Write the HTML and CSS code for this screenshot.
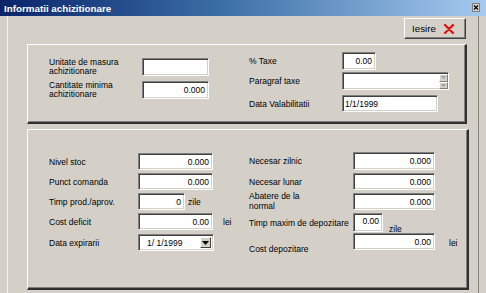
FILE: index.html
```html
<!DOCTYPE html>
<html>
<head>
<meta charset="utf-8">
<link rel="stylesheet" href="styles.css">
</head>
<body>
<div class="window">
  <div class="titlebar">
    <span class="title">Informatii achizitionare</span>
    <span class="close"><svg width="8" height="9" viewBox="0 0 8 9"><rect x="0.5" y="0.5" width="7" height="8" fill="#d4d0c8" stroke="#808080"/><path d="M2 2.5 L6 6.5 M6 2.5 L2 6.5" stroke="#000" stroke-width="1.1"/></svg></span>
  </div>
  <div class="client">
    <div class="toolbar">
      <div class="btn-exit"><span class="btn-label">Iesire</span><svg class="xicon" width="12" height="10" viewBox="0 0 12 10"><path d="M2 1 L10 9 M10 1 L2 9" stroke="#e01010" stroke-width="2.2" stroke-linecap="round"/></svg></div>
    </div>

    <div class="panel panel-top">
      <div class="col col-left-top">
        <div class="row r-h18 mb5">
          <div class="lbl w93 two">Unitate de masura<br>achizitionare</div>
          <div class="field w67 h18"></div>
        </div>
        <div class="row r-h18">
          <div class="lbl w93 two">Cantitate minima<br>achizitionare</div>
          <div class="field w67 h18">0.000</div>
        </div>
      </div>
      <div class="col col-right-top">
        <div class="row r-h18">
          <div class="lbl w93">% Taxe</div>
          <div class="field w34 h18">0.00</div>
        </div>
        <div class="row r-h18 mt2">
          <div class="lbl w93">Paragraf taxe</div>
          <div class="field combo w107 h18">
            <div class="spin">
              <span class="spinbtn"><svg width="5" height="3" viewBox="0 0 5 3"><path d="M0 0 H5 L2.5 3 Z" fill="#a0a0a0"/></svg></span>
              <span class="spinbtn"><svg width="5" height="3" viewBox="0 0 5 3"><path d="M0 0 H5 L2.5 3 Z" fill="#a0a0a0"/></svg></span>
            </div>
          </div>
        </div>
        <div class="row r-h17 mt5">
          <div class="lbl w93">Data Valabilitatii</div>
          <div class="field left w96 h17">1/1/1999</div>
        </div>
      </div>
    </div>

    <div class="panel panel-bottom">
      <div class="col col-left-bot">
        <div class="row r-h17 mb3">
          <div class="lbl w89">Nivel stoc</div>
          <div class="field w75 h17">0.000</div>
        </div>
        <div class="row r-h17 mb3">
          <div class="lbl w89">Punct comanda</div>
          <div class="field w75 h17">0.000</div>
        </div>
        <div class="row r-h17 mb3">
          <div class="lbl w89">Timp prod./aprov.</div>
          <div class="field w47 h17">0</div>
          <span class="unit u-zile">zile</span>
        </div>
        <div class="row r-h17 mb4">
          <div class="lbl w89">Cost deficit</div>
          <div class="field w75 h17">0.00</div>
          <span class="unit u-lei">lei</span>
        </div>
        <div class="row r-h17">
          <div class="lbl w89">Data expirarii</div>
          <div class="field date w76 h17">
            <span class="dateval">1/ 1/1999</span>
            <span class="dropbtn"><svg width="7" height="4" viewBox="0 0 7 4"><path d="M0 0 H7 L3.5 4 Z" fill="#000"/></svg></span>
          </div>
        </div>
      </div>
      <div class="col col-right-bot">
        <div class="row r-h18 mb3">
          <div class="lbl w104">Necesar zilnic</div>
          <div class="field w82 h18">0.000</div>
        </div>
        <div class="row r-h17 mb3">
          <div class="lbl w104">Necesar lunar</div>
          <div class="field w82 h17">0.000</div>
        </div>
        <div class="row r-h17 mb3">
          <div class="lbl w104 two">Abatere de la<br>normal</div>
          <div class="field w82 h17">0.000</div>
        </div>
        <div class="row r-h19 mb1">
          <div class="lbl w104">Timp maxim de depozitare</div>
          <div class="field w30 h19 top">0.00</div>
          <span class="unit u-zile2">zile</span>
        </div>
        <div class="row r-h17">
          <div class="lbl w104 low">Cost depozitare</div>
          <div class="field w82 h17">0.00</div>
          <span class="unit u-lei2">lei</span>
        </div>
      </div>
    </div>
  </div>
</div>
</body>
</html>
```

FILE: styles.css
```css
html, body {
  margin: 0;
  padding: 0;
}
body {
  width: 486px;
  height: 293px;
  overflow: hidden;
  background: #d4d0c8;
  font-family: "Liberation Sans", Arial, sans-serif;
  font-size: 8.5px;
  color: #000;
}
.window {
  width: 486px;
  height: 293px;
  display: flex;
  flex-direction: column;
}
.titlebar {
  height: 16px;
  flex: none;
  background: linear-gradient(to right, #0a246a 0%, #3a6ea5 45%, #a6caf0 100%);
  display: flex;
  align-items: center;
  justify-content: space-between;
  box-sizing: border-box;
  padding: 1px 6px 0 4px;
}
.title {
  color: #fff;
  font-weight: bold;
  font-size: 9.8px;
  letter-spacing: 0;
}
.close {
  display: flex;
  margin-top: -2px;
}
.client {
  flex: 1;
  margin-left: 7px;
  width: 472px;
  box-sizing: border-box;
  border-left: 1px solid #f4f3f0;
  border-right: 1px solid #8a8780;
  padding-left: 19px;
}
.toolbar {
  display: flex;
  justify-content: flex-end;
  padding-top: 2px;
  padding-right: 12px;
}
.btn-exit {
  width: 62px;
  height: 21px;
  box-sizing: border-box;
  border-top: 1px solid #fff;
  border-left: 1px solid #fff;
  border-right: 1px solid #404040;
  border-bottom: 1px solid #404040;
  box-shadow: inset -1px -1px 0 #808080;
  display: flex;
  align-items: center;
  padding-left: 7px;
}
.btn-label {
  font-size: 9.8px;
  width: 31px;
}
.xicon {
  display: block;
  margin-top: 1px;
}
.panel {
  box-sizing: border-box;
  border-top: 1px solid #fff;
  border-left: 1px solid #fff;
  border-right: 2px solid #303030;
  border-bottom: 2px solid #303030;
  box-shadow: inset -1px -1px 0 #808080;
  display: flex;
}
.panel-top {
  margin-top: 5px;
  width: 440px;
  height: 80px;
}
.panel-bottom {
  margin-top: 5px;
  width: 442px;
  height: 161px;
}
.col {
  display: flex;
  flex-direction: column;
}
.col-left-top {
  width: 221px;
  box-sizing: border-box;
  padding-left: 21px;
  padding-top: 13px;
}
.col-right-top {
  padding-top: 7px;
}
.col-left-bot {
  width: 221px;
  box-sizing: border-box;
  padding-left: 21px;
  padding-top: 23px;
}
.col-right-bot {
  padding-top: 22px;
}
.row {
  display: flex;
  align-items: center;
  flex: none;
}
.r-h17 { height: 17px; }
.r-h18 { height: 18px; }
.r-h19 { height: 19px; }
.mb1 { margin-bottom: 1px; }
.mb3 { margin-bottom: 3px; }
.mb4 { margin-bottom: 4px; }
.mb5 { margin-bottom: 5px; }
.mt2 { margin-top: 2px; }
.mt5 { margin-top: 5px; }
.lbl {
  flex: none;
  line-height: 10px;
  white-space: nowrap;
}
.lbl.two {
  line-height: 9.5px;
}
.lbl.low {
  align-self: flex-end;
  margin-bottom: -4px;
}
.w89 { width: 89px; }
.w93 { width: 93px; }
.w104 { width: 104px; }
.field {
  flex: none;
  box-sizing: border-box;
  background: #fff;
  border-top: 1px solid #808080;
  border-left: 1px solid #808080;
  border-right: 1px solid #fff;
  border-bottom: 1px solid #fff;
  box-shadow: inset 1px 1px 0 #404040, inset -1px -1px 0 #d4d0c8;
  display: flex;
  align-items: center;
  justify-content: flex-end;
  padding: 0 3px 0 2px;
  line-height: 10px;
}
.field.left {
  justify-content: flex-start;
  padding-left: 2px;
}
.field.top {
  align-items: flex-start;
  padding-top: 2px;
}
.w30 { width: 30px; }
.w34 { width: 34px; }
.w47 { width: 47px; }
.w67 { width: 67px; }
.w75 { width: 75px; }
.w76 { width: 76px; }
.w82 { width: 82px; }
.w96 { width: 96px; }
.w107 { width: 107px; }
.h17 { height: 17px; }
.h18 { height: 18px; }
.h19 { height: 19px; }
.combo {
  padding: 0;
  justify-content: flex-end;
  align-items: stretch;
}
.spin {
  display: flex;
  flex-direction: column;
  width: 9px;
  margin: 1px 0 0;
}
.spinbtn {
  flex: 1;
  background: #d4d0c8;
  border-top: 1px solid #fff;
  border-left: 1px solid #fff;
  border-right: 1px solid #808080;
  border-bottom: 1px solid #808080;
  display: flex;
  align-items: center;
  justify-content: center;
}
.date {
  justify-content: space-between;
  padding: 2px 2px 2px 8px;
  align-items: stretch;
}
.dateval {
  display: flex;
  align-items: center;
}
.dropbtn {
  width: 11px;
  background: #d4d0c8;
  border-top: 1px solid #fff;
  border-left: 1px solid #fff;
  border-right: 1px solid #404040;
  border-bottom: 1px solid #404040;
  box-sizing: border-box;
  display: flex;
  align-items: center;
  justify-content: center;
}
.unit {
  flex: none;
  line-height: 10px;
}
.u-zile { margin-left: 3px; }
.u-lei { margin-left: 10px; }
.u-zile2 {
  margin-left: 6px;
  align-self: flex-end;
  margin-bottom: -2px;
}
.u-lei2 {
  margin-left: 14px;
  margin-top: 3px;
}
```
